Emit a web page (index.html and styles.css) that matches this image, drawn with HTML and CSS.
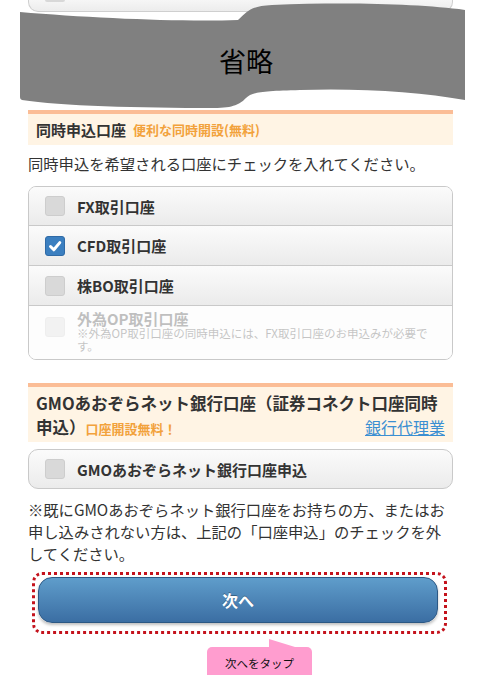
FILE: index.html
```html
<!DOCTYPE html>
<html lang="ja">
<head>
<meta charset="utf-8">
<title>同時申込口座</title>
<link rel="stylesheet" href="styles.css">
</head>
<body>
<div class="page">
  <div class="top">
    <div class="stub"><span class="stub-cb"></span></div>
    <div class="ribbon">
      <svg class="ribbon-bg" viewBox="20 0 446 112" width="446" height="112" aria-hidden="true">
        <path d="M20,12 C90,18 180,22 238,20 C247,12 250,6 272,5 C350,2 420,4 465,10 L465,100 C420,92 360,88 300,90 C262,91 252,92 246,98 C240,104 234,108 214,108 C140,108 60,106 22,100 C20,99 20,98 20,96 Z" fill="#808080"/>
      </svg>
      <span class="ribbon-text">省略</span>
    </div>
  </div>

  <section class="sec">
    <h2 class="sec-head"><span class="sec-title">同時申込口座</span><span class="sub">便利な同時開設(無料)</span></h2>
    <p class="desc">同時申込を希望される口座にチェックを入れてください。</p>
    <ul class="list">
      <li class="row"><span class="cb"></span><span class="lbl">FX取引口座</span></li>
      <li class="row"><span class="cb checked"><svg viewBox="0 0 20 20" width="20" height="20"><path d="M5.5 10.5 L8.8 13.8 L14.8 6.6" fill="none" stroke="#fff" stroke-width="3" stroke-linecap="round" stroke-linejoin="round"/></svg></span><span class="lbl">CFD取引口座</span></li>
      <li class="row"><span class="cb"></span><span class="lbl">株BO取引口座</span></li>
      <li class="row disabled"><span class="cb"></span><span class="lbl-wrap"><span class="lbl">外為OP取引口座</span><span class="note">※外為OP取引口座の同時申込には、FX取引口座のお申込みが必要です。</span></span></li>
    </ul>
  </section>

  <section class="sec gmo">
    <h2 class="sec-head gmo-head">GMOあおぞらネット銀行口座（証券コネクト口座同時申込）<span class="sub">口座開設無料！</span><a class="agent" href="#">銀行代理業</a></h2>
    <div class="single"><span class="cb"></span><span class="lbl">GMOあおぞらネット銀行口座申込</span></div>
    <p class="info">※既にGMOあおぞらネット銀行口座をお持ちの方、またはお申し込みされない方は、上記の「口座申込」のチェックを外してください。</p>
  </section>

  <div class="focus">
    <button class="next" type="button">次へ</button>
  </div>
  <div class="tip">次へをタップ</div>
</div>
</body>
</html>
```

FILE: styles.css
```css
* { box-sizing: border-box; }
html, body { margin: 0; padding: 0; background: #fff; }
body {
  font-family: "Noto Sans CJK JP", "Noto Sans", sans-serif;
  color: #333;
  overflow: hidden;
}
.page {
  width: 425px;
  margin: 0 0 0 28px;
}
.top {
  position: relative;
  height: 110px;
}
.stub {
  position: relative;
  height: 12px;
  border: 1px solid #cfcfcf;
  border-top: none;
  border-radius: 0 0 10px 10px;
  background: linear-gradient(#f6f6f6, #ececec);
}
.stub-cb {
  position: absolute;
  left: 16px;
  top: 0;
  width: 20px;
  height: 2px;
  background: #d8d8d8;
  border-radius: 0 0 3px 3px;
}
.ribbon {
  position: absolute;
  left: -8px;
  top: 0;
  width: 446px;
  height: 112px;
  display: flex;
  align-items: center;
  justify-content: center;
  padding: 8px 0 0 6px;
}
.ribbon-bg {
  position: absolute;
  left: 0;
  top: 0;
}
.ribbon-text {
  position: relative;
  font-size: 27px;
  line-height: 1;
  color: #000;
}
.sec-head {
  margin: 0;
  border-top: 4px solid #fbbd96;
  background: #fff4e4;
  height: 35px;
  padding: 0 8px;
  display: flex;
  align-items: center;
  font-size: 15px;
  font-weight: bold;
  color: #333;
}
.sec-title { margin-right: 7px; }
.sub {
  font-size: 13px;
  font-weight: bold;
  color: #f2a23c;
}
.desc {
  margin: 7px 0 12px;
  font-size: 15.3px;
  line-height: 22px;
}
.list {
  list-style: none;
  margin: 0;
  padding: 0;
  border: 1px solid #c9c9c9;
  border-radius: 8px;
  overflow: hidden;
}
.row {
  height: 40px;
  display: flex;
  align-items: center;
  gap: 12px;
  padding: 0 10px 0 16px;
  border-bottom: 1px solid #c9c9c9;
  background: linear-gradient(#fbfbfb, #ebebeb);
}
.row:first-child { height: 39px; }
.cb {
  flex: none;
  width: 20px;
  height: 20px;
  border-radius: 3px;
  background: #d9d9d9;
  border: 1px solid #cdcdcd;
  display: flex;
  align-items: center;
  justify-content: center;
}
.cb.checked {
  background: #3b7fc0;
  border-color: #2f6aa6;
}
.cb svg { display: block; margin: -1px; }
.lbl {
  font-size: 15px;
  font-weight: bold;
  line-height: 17px;
  color: #333;
}
.row.disabled {
  height: 53px;
  border-bottom: none;
  align-items: flex-start;
  padding-top: 4px;
  background: #fdfdfd;
}
.row.disabled .cb { margin-top: 7px; opacity: 0.3; }
.lbl-wrap {
  display: flex;
  flex-direction: column;
  opacity: 0.3;
}
.note {
  font-size: 11.5px;
  line-height: 12.5px;
  color: #444;
}
.gmo { margin-top: 23px; }
.gmo-head {
  display: block;
  height: auto;
  padding: 4px 8px 1px;
  font-size: 16.5px;
  line-height: 24px;
}
.agent {
  float: right;
  font-size: 16px;
  font-weight: normal;
  color: #3a8fd2;
  text-decoration: underline;
}
.single {
  margin-top: 7px;
  height: 40px;
  border: 1px solid #c9c9c9;
  border-radius: 10px;
  display: flex;
  align-items: center;
  gap: 12px;
  padding: 0 16px;
  background: linear-gradient(#fbfbfb, #ebebeb);
}
.info {
  margin: 9px 0 0;
  font-size: 15.3px;
  line-height: 22px;
}
.focus {
  margin: 8px 6px 0 4px;
  padding: 2px 6px 8px 3px;
  border: 3px dotted #c4121c;
  border-radius: 10px;
}
.next {
  display: block;
  width: 100%;
  height: 46px;
  border: 1px solid #2c5884;
  border-radius: 14px;
  background: linear-gradient(#5f9dcb, #3b6ea3);
  box-shadow: 0 2px 3px rgba(0,0,0,0.25);
  color: #fff;
  font-family: "Noto Sans CJK JP", sans-serif;
  font-size: 16px;
  font-weight: bold;
  text-shadow: 0 -1px 0 rgba(0,0,0,0.3);
  padding: 0;
}
.tip {
  position: relative;
  margin: 13px 0 0 179px;
  width: 105px;
  height: 34px;
  border-radius: 5px;
  background: #ff9dcf;
  color: #111;
  font-size: 11.5px;
  line-height: 32px;
  text-align: center;
}
.tip::before {
  content: "";
  position: absolute;
  left: 62px;
  top: -8px;
  border-left: 0 solid transparent;
  border-right: 26px solid transparent;
  border-bottom: 8px solid #ff9dcf;
}
```
